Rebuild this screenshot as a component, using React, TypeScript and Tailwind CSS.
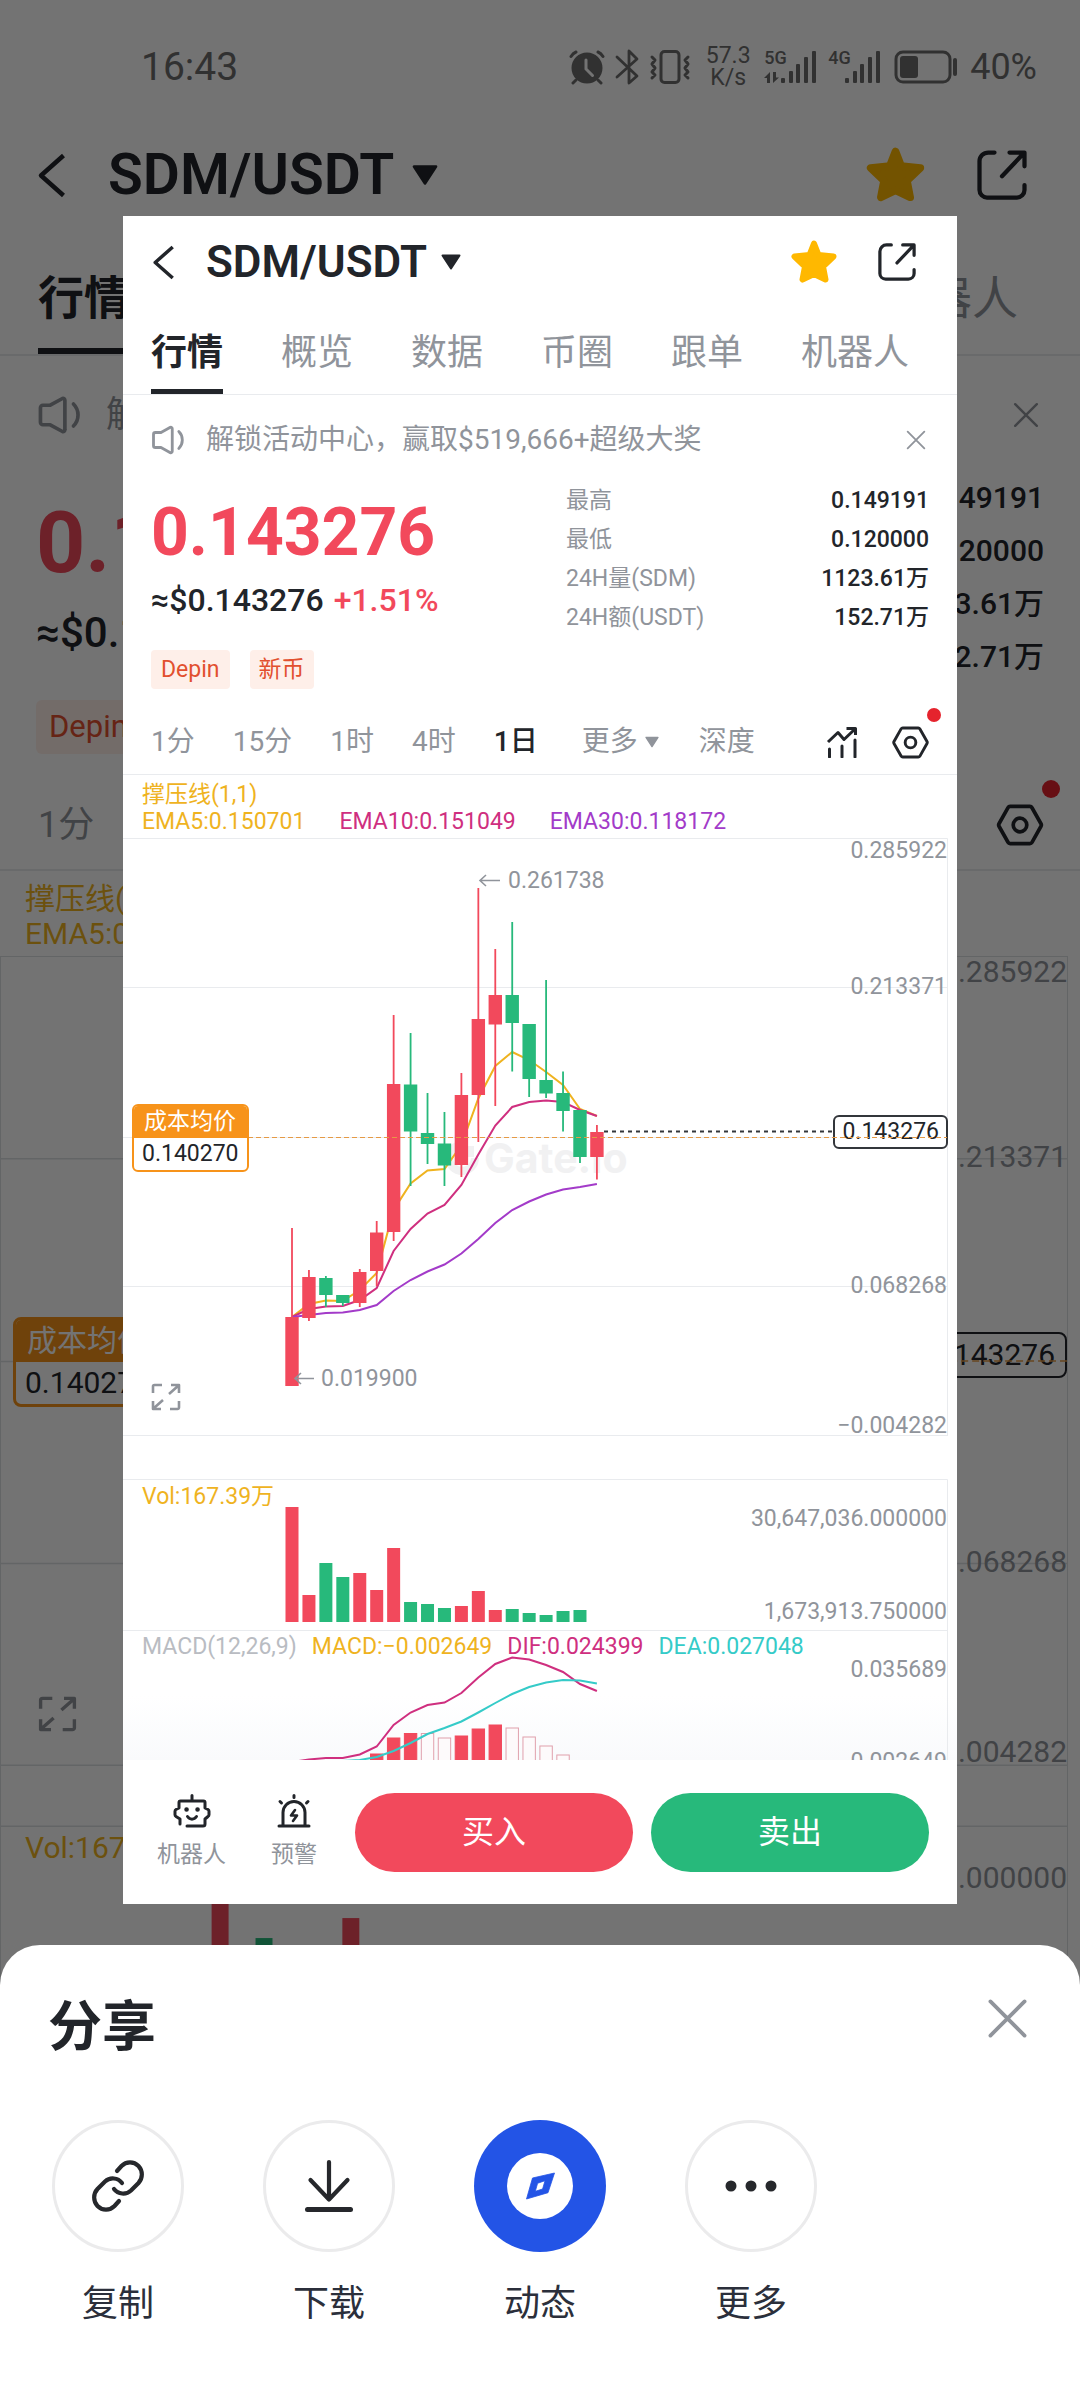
import React from 'react';

const RED = '#f2495c';
const GREEN = '#27b97b';
const YELLOW = '#efb31f';
const PINK = '#cf2f7f';
const PURPLE = '#a33bc9';
const CYAN = '#35cbc8';

const FIRST_X = 169;
const STEP = 16.94;

// high, low, body top, body bottom
const candles = [
  { high: 390, low: 548, top: 479, bottom: 548, up: true },
  { high: 432, low: 483, top: 439, bottom: 480, up: true },
  { high: 438, low: 469, top: 440, bottom: 457, up: false },
  { high: 457, low: 468, top: 457, bottom: 465, up: false },
  { high: 431, low: 469, top: 434, bottom: 465, up: true },
  { high: 383, low: 448, top: 394.5, bottom: 433, up: true },
  { high: 177, low: 403, top: 246, bottom: 394, up: true },
  { high: 195, low: 348, top: 246.5, bottom: 293.5, up: false },
  { high: 255, low: 326, top: 295, bottom: 306, up: false },
  { high: 274, low: 348, top: 305.5, bottom: 327.5, up: false },
  { high: 235, low: 339, top: 257, bottom: 327, up: true },
  { high: 50, low: 304, top: 181, bottom: 257, up: true },
  { high: 111, low: 268, top: 157, bottom: 186.5, up: true },
  { high: 84, low: 233.5, top: 157, bottom: 185, up: false },
  { high: 186, low: 259, top: 186, bottom: 241, up: false },
  { high: 142, low: 260, top: 242, bottom: 255.5, up: false },
  { high: 233.5, low: 293.5, top: 255, bottom: 273, up: false },
  { high: 272, low: 325, top: 272, bottom: 319, up: false },
  { high: 287, low: 341.5, top: 294, bottom: 319, up: true },
];

const ema5 = [479, 466, 462.5, 463, 452, 435, 372, 345.5, 332.5, 331, 307, 260.5, 228, 214, 222, 234, 247, 271, 278];
const ema10 = [479, 471, 468.5, 468, 462, 450, 413, 391, 375.5, 367, 347, 316.5, 287.5, 269, 264, 262.5, 264, 272, 278];
const ema30 = [479, 477, 475, 474.5, 472, 467, 453, 442, 433.5, 426.5, 415.5, 401, 385, 372, 363.5, 356.5, 351.5, 349, 346];

const volumes = [115, 27, 59, 45, 49, 32, 74, 20, 18, 14, 16, 31, 12, 13, 9, 7, 11, 12];

const dif = [131, 128.5, 127, 127, 123.5, 115.5, 94, 81.5, 74, 71.5, 62, 46.5, 33, 26.5, 28.5, 34, 41, 53, 60];
const dea = [133, 132, 131, 130, 129, 126, 120, 112, 103, 97, 90.5, 81.5, 72, 63, 56, 51.5, 49, 49.5, 52.5];
const macdBars = [
  { i: 5, top: 123, solid: true },
  { i: 6, top: 107, solid: true },
  { i: 7, top: 102.5, solid: true },
  { i: 8, top: 102.5, solid: false },
  { i: 9, top: 107, solid: false },
  { i: 10, top: 105, solid: true },
  { i: 11, top: 98, solid: true },
  { i: 12, top: 94, solid: true },
  { i: 13, top: 97, solid: false },
  { i: 14, top: 106, solid: false },
  { i: 15, top: 115, solid: false },
  { i: 16, top: 124, solid: false },
];

const cx = (i: number) => FIRST_X + i * STEP;
const toPoints = (ys: number[]) => ys.map((y, i) => `${cx(i).toFixed(1)},${y}`).join(' ');

type IconProps = { className?: string };

function BackIcon({ className }: IconProps) {
  return (
    <svg className={className} viewBox="0 0 24 36" fill="none" stroke="currentColor" strokeWidth="3.600" strokeLinejoin="round">
      <path d="M22 2L4 18l18 16" />
    </svg>
  );
}

function CaretIcon({ className }: IconProps) {
  return (
    <svg className={className} viewBox="0 0 20 16" fill="currentColor" stroke="currentColor" strokeWidth="2" strokeLinejoin="round">
      <path d="M1.500 1.500h17L10 14.500z" />
    </svg>
  );
}

function StarIcon({ className }: IconProps) {
  return (
    <svg className={className} viewBox="0 0 46 44" fill="#ffb800" stroke="#ffb800" strokeWidth="6" strokeLinejoin="round">
      <path d="M23 3.500l4.500 11.500 15 1.500-10.500 10 2.500 13L23 34l-11.500 5.500 2.500-13L3.500 16.500l15-1.500z" />
    </svg>
  );
}

function ShareIcon({ className }: IconProps) {
  return (
    <svg className={className} viewBox="0 0 40 40" fill="none" stroke="currentColor" strokeWidth="3.400" strokeLinecap="round" strokeLinejoin="round">
      <path d="M14 2H9a7 7 0 0 0-7 7v23a6 6 0 0 0 6 6h24a6 6 0 0 0 6-6v-4" />
      <path d="M26 2h12v11M37 3L20 21" />
    </svg>
  );
}

function SpeakerIcon({ className }: IconProps) {
  return (
    <svg className={className} viewBox="0 0 36 32" fill="none" stroke="currentColor" strokeWidth="3" strokeLinecap="round" strokeLinejoin="round">
      <path d="M4 8h6l10-5.500a1.500 1.500 0 0 1 2 1.500v24a1.500 1.500 0 0 1-2 1.500L10 24H4a2 2 0 0 1-2-2V10a2 2 0 0 1 2-2z" />
      <path d="M29 7c5 5 5 13 0 18" />
    </svg>
  );
}

function CloseIcon({ className }: IconProps) {
  return (
    <svg className={className} viewBox="0 0 24 24" fill="none" stroke="currentColor" strokeWidth="2.200" strokeLinecap="round">
      <path d="M2 2l20 20M22 2L2 22" />
    </svg>
  );
}

function TrendIcon({ className }: IconProps) {
  return (
    <svg className={className} viewBox="0 0 32 32" fill="none" stroke="currentColor" strokeWidth="3" strokeLinejoin="round">
      <path d="M2 16L12 6.500l6 7L29 3" />
      <path d="M20.500 2.500H29.500V9" />
      <path d="M3.500 23v8M16 20v11M29 14v17" strokeLinecap="round" />
    </svg>
  );
}

function HexIcon({ className }: IconProps) {
  return (
    <svg className={className} viewBox="0 0 38 34" fill="none" stroke="currentColor" strokeWidth="3" strokeLinejoin="round">
      <path d="M11 2h16a2 2 0 0 1 1.700 1L36 16a2 2 0 0 1 0 2l-7.300 13a2 2 0 0 1-1.700 1H11a2 2 0 0 1-1.700-1L2 18a2 2 0 0 1 0-2L9.300 3A2 2 0 0 1 11 2z" />
      <circle cx="19" cy="17" r="5.500" />
    </svg>
  );
}

function ExpandIcon({ className }: IconProps) {
  return (
    <svg className={className} viewBox="0 0 30 28" fill="none" stroke="currentColor" strokeWidth="2.600" strokeLinejoin="round">
      <path d="M2 10V3.500A1.500 1.500 0 0 1 3.500 2H11M28 18v6.500a1.500 1.500 0 0 1-1.500 1.500H19" />
      <path d="M20 2h8v8M27 3l-9 8M10 26H2v-8M3 25l9-8" />
    </svg>
  );
}

function RobotIcon({ className }: IconProps) {
  return (
    <svg className={className} viewBox="0 0 38 34" fill="none" stroke="currentColor" strokeWidth="3" strokeLinecap="round" strokeLinejoin="round">
      <path d="M7 30v-5l-4-2.500a2 2 0 0 1-1-1.700v-3.600a2 2 0 0 1 1-1.700L6 14v-5.500A1.500 1.500 0 0 1 7.500 7h23A1.500 1.500 0 0 1 32 8.500V14l3 1.500a2 2 0 0 1 1 1.700v3.600a2 2 0 0 1-1 1.700L32 25v5a2 2 0 0 1-2 2H14" />
      <path d="M19 1.500V6M14.500 22.500c2.500 3.500 6.500 3.500 9 0" />
      <path d="M13.500 15.500h.1M24.500 15.500h.1" strokeWidth="4.500" />
    </svg>
  );
}

function AlarmIcon({ className }: IconProps) {
  return (
    <svg className={className} viewBox="0 0 34 34" fill="none" stroke="currentColor" strokeWidth="3" strokeLinecap="round" strokeLinejoin="round">
      <path d="M2 32h30M6 32V18.500a11 11 0 0 1 22 0V32" />
      <path d="M17 1.500V3.500M3 7.500l1.500 1.500M31 7.500L29.500 9" />
      <path d="M18 16l-4 5.500h6l-4 5.500" strokeWidth="2.600" />
    </svg>
  );
}

function AlarmClockIcon({ className }: IconProps) {
  return (
    <svg className={className} viewBox="0 0 36 36" fill="none" stroke="currentColor" strokeLinecap="round">
      <circle cx="18" cy="19" r="14.500" fill="currentColor" strokeWidth="2" />
      <path d="M2 7.500C3.500 5 4.500 4 7 3M34 7.500C32.500 5 31.500 4 29 3M7 31l-3 3M29 31l3 3" strokeWidth="3" />
      <path d="M17 11v9l6.500 6.500" stroke="#fff" strokeWidth="3" />
    </svg>
  );
}

function BluetoothIcon({ className }: IconProps) {
  return (
    <svg className={className} viewBox="0 0 24 36" fill="none" stroke="currentColor" strokeWidth="2.800" strokeLinejoin="round" strokeLinecap="round">
      <path d="M2 8l20 19-8 7V2l8 8L2 28" />
    </svg>
  );
}

function VibrateIcon({ className }: IconProps) {
  return (
    <svg className={className} viewBox="0 0 42 36" fill="none" stroke="currentColor" strokeWidth="3" strokeLinejoin="round" strokeLinecap="round">
      <rect x="12" y="2.500" width="18" height="31" rx="3.500" />
      <path d="M3 8l3 3-3 4 3 4-3 4 3 3-3 3M39 8l-3 3 3 4-3 4 3 4-3 3 3 3" />
    </svg>
  );
}

function SignalBars({ className, arrows }: IconProps & { arrows?: boolean }) {
  return (
    <svg className={className} viewBox="0 0 52 36" fill="currentColor">
      {arrows && <path d="M6 34V23L0 29h3v5zM9 23v11l6-5.500h-3V23z" />}
      <rect x="17" y="29" width="4" height="5" rx="1" />
      <rect x="25" y="22" width="4" height="12" rx="1" />
      <rect x="32" y="15" width="4" height="19" rx="1" />
      <rect x="40" y="8" width="4" height="26" rx="1" />
      <rect x="48" y="2" width="4" height="32" rx="1" />
    </svg>
  );
}

function BatteryIcon({ className }: IconProps) {
  return (
    <svg className={className} viewBox="0 0 64 34" fill="none" stroke="currentColor" strokeWidth="3">
      <rect x="2" y="2" width="54" height="30" rx="7" />
      <rect x="6" y="6" width="18" height="22" rx="3" fill="currentColor" stroke="none" />
      <path d="M61 10v14" strokeWidth="4" strokeLinecap="round" />
    </svg>
  );
}

function StatusBar() {
  return (
    <div className="flex h-[120px] items-center pl-[141px] pr-[43px] pt-[14px] text-[#6e6e6e]">
      <span className="text-[39px] leading-[48px]">16:43</span>
      <div className="ml-auto flex items-center">
        <AlarmClockIcon className="h-9 w-9" />
        <BluetoothIcon className="ml-[10px] h-9 w-6" />
        <VibrateIcon className="ml-[10px] h-9 w-[42px]" />
        <span className="ml-[14px] w-[46px] text-center text-[23px] leading-[22px]">57.3 K/s</span>
        <span className="ml-[13px] h-9 w-[24px] text-[18px] font-medium leading-[18px]">5G</span>
        <SignalBars arrows className="-ml-6 h-9 w-[52px]" />
        <span className="ml-3 h-9 w-[24px] text-[18px] font-medium leading-[18px]">4G</span>
        <SignalBars className="-ml-6 h-9 w-[52px]" />
        <BatteryIcon className="ml-[14px] h-[34px] w-16" />
        <span className="ml-3 text-[36px] leading-[40px]">40%</span>
      </div>
    </div>
  );
}

const backdropLabels = [
  { text: '0.285922', y: 15 },
  { text: '0.213371', y: 200 },
  { text: '0.068268', y: 605 },
  { text: '−0.004282', y: 795 },
  { text: '30,647,036.000000', y: 921 },
];

function Backdrop() {
  return (
    <div aria-hidden="true" className="text-[#22252a]">
      <StatusBar />

      <div className="flex h-[110px] items-center pl-9 pr-[53px]">
        <BackIcon className="h-[45px] w-[30px]" />
        <span className="ml-[42px] text-[57px] font-semibold">SDM/USDT</span>
        <CaretIcon className="ml-[18px] h-[22px] w-[26px]" />
        <StarIcon className="ml-auto h-[56px] w-[59px]" />
        <ShareIcon className="ml-[52px] h-[50px] w-[50px]" />
      </div>

      <div className="flex h-[126px] justify-between border-b-2 border-[#e8eaed] pl-[38px] pr-[62px] text-[46px]">
        <span className="border-b-[6px] border-[#22252a] pt-[34px] font-bold leading-[68px]">行情</span>
        <span className="pt-[34px] leading-[68px] text-[#90949b]">机器人</span>
      </div>

      <div className="flex h-[115px] items-center pl-[38px] pr-[41px] pt-[3px] text-[36px] text-[#90949b]">
        <SpeakerIcon className="h-[40px] w-[44px]" />
        <span className="ml-6">解锁活动中心</span>
        <CloseIcon className="ml-auto h-[26px] w-[26px]" />
      </div>

      <div className="flex h-[302px] justify-between pl-[36px] pr-[36px]">
        <div>
          <div className="pt-[24px] text-[86px] font-bold leading-[96px] text-[#f2495c]">0.143276</div>
          <div className="pt-[18px] text-[42px] font-medium leading-[48px]">≈$0.143276</div>
          <div className="mt-[43px] w-fit rounded-md bg-[#feefe9] px-[13px] text-[31px] leading-[54px] text-[#e2502f]">Depin</div>
        </div>
        <div className="text-right text-[30px] font-medium leading-[53px]">
          <div>0.149191</div>
          <div>0.120000</div>
          <div>1123.61万</div>
          <div>152.71万</div>
        </div>
      </div>

      <div className="flex h-[98px] items-center justify-between border-b-2 border-[#e8eaed] pl-[38px] pr-[36px] pt-2">
        <span className="text-[36px] text-[#90949b]">1分</span>
        <span className="relative">
          <HexIcon className="h-[42px] w-[48px]" />
          <span className="absolute -right-4 -top-[24px] h-[18px] w-[18px] rounded-full bg-[#e5232d]" />
        </span>
      </div>

      <div className="h-[85px] pl-[25px] pt-[10px] text-[30px] leading-[35px] text-[#efb31f]">
        <div>撑压线(1,1)</div>
        <div>EMA5:0.150701</div>
      </div>

      <div className="relative mr-3 h-[1040px] border-x border-t border-[#dcdfe3] text-[30px] leading-[36px] text-[#90949b]">
        <svg className="absolute inset-0 h-full w-full" viewBox="0 0 1068 1040" preserveAspectRatio="none">
          <g stroke="#dcdfe3" strokeWidth="1.500">
            <path d="M0 202H1068M0 405H1068M0 607H1068M0 809H1068M0 870H1068" />
          </g>
          <rect x="211" y="880" width="17" height="150" fill={RED} />
          <rect x="255" y="982" width="17" height="50" fill={GREEN} />
          <rect x="342" y="962" width="17" height="70" fill={RED} />
        </svg>
        {backdropLabels.map((label) => (
          <span key={label.text} className="absolute right-0 -translate-y-1/2" style={{ top: label.y }}>
            {label.text}
          </span>
        ))}
        <span className="absolute right-0 top-[375px] rounded-lg border-2 border-[#22252a] bg-white px-[10px] leading-[42px] text-[#22252a]">0.143276</span>
        <div className="absolute left-3 top-[360px] overflow-hidden rounded-lg border-[3px] border-[#f7931a] bg-white leading-[42px] text-[#22252a]">
          <div className="bg-[#f7931a] px-[11px] text-white">成本均价</div>
          <div className="px-[9px]">0.140270</div>
        </div>
        <svg className="absolute inset-x-0 top-[402px] h-1 w-full" viewBox="0 0 1068 4" preserveAspectRatio="none">
          <path d="M830 2H1068" stroke="#e59a45" strokeWidth="1.500" strokeDasharray="7 4" />
        </svg>
        <ExpandIcon className="absolute left-[37px] top-[738px] h-[38px] w-[39px]" />
        <span className="absolute left-[24px] top-[873px] text-[#efb31f]">Vol:167.39万</span>
      </div>
    </div>
  );
}

const tabs = ['行情', '概览', '数据', '币圈', '跟单', '机器人'];

const stats = [
  { label: '最高', value: '0.149191' },
  { label: '最低', value: '0.120000' },
  { label: '24H量(SDM)', value: '1123.61万' },
  { label: '24H额(USDT)', value: '152.71万' },
];

const periods = ['1分', '15分', '1时', '4时', '1日'];

function AxisLabel({ text, y }: { text: string; y: number }) {
  return (
    <span className="absolute right-[10px] -translate-y-1/2 text-[#90949b]" style={{ top: y }}>
      {text}
    </span>
  );
}

function PriceChart() {
  return (
    <div className="relative h-[598px]">
      <svg className="absolute inset-0 h-full w-full" viewBox="0 0 834 598" preserveAspectRatio="none" stroke="#e9ebee">
        <path d="M0 .5H824.500V598M0 149.500H824M0 299.500H824M0 448.500H824M0 597.500H824" fill="none" />
      </svg>
      <div className="absolute left-[322px] top-[297px] flex items-center gap-[5px] text-[#f1f1f2]">
        <svg className="h-[34px] w-[34px]" viewBox="0 0 34 34" fill="none" stroke="currentColor" strokeWidth="8">
          <path d="M17 4a13 13 0 1 0 13 13" />
          <rect x="18" y="5" width="11" height="11" fill="currentColor" stroke="none" />
        </svg>
        <span className="font-['Inter',sans-serif] text-[41px] font-bold leading-[46px]">Gate.io</span>
      </div>
      <AxisLabel text="0.285922" y={12} />
      <AxisLabel text="0.213371" y={148} />
      <AxisLabel text="0.068268" y={447} />
      <AxisLabel text="−0.004282" y={587} />
      <span className="absolute right-[9px] top-[277px] rounded-md border-2 border-[#33363b] bg-white px-[7px] leading-[30px] text-[#22252a]">0.143276</span>
      <svg className="absolute inset-0 h-full w-full" viewBox="0 0 834 598" preserveAspectRatio="none">
        <g fill="none" strokeWidth="2">
          <polyline points={toPoints(ema5)} stroke={YELLOW} />
          <polyline points={toPoints(ema10)} stroke={PINK} />
          <polyline points={toPoints(ema30)} stroke={PURPLE} />
        </g>
        {candles.map((c, i) => (
          <g key={i} fill={c.up ? RED : GREEN}>
            <rect x={cx(i) - 0.9} y={c.high} width="1.8" height={c.low - c.high} />
            <rect x={cx(i) - 6.7} y={c.top} width="13.4" height={c.bottom - c.top} />
          </g>
        ))}
        <path d="M481 293.500H711" stroke="#33363b" strokeWidth="2" strokeDasharray="4 4" />
        <path d="M125 299.500H824" stroke="#e59a45" strokeWidth="1.2" strokeDasharray="5 3" />
        <g stroke="#90949b" strokeWidth="1.600" fill="none">
          <path d="M377 42.500H357M363 37l-6 5.500 6 5.500" />
          <path d="M191 540.500H172M178 535l-6 5.500 6 5.500" />
        </g>
      </svg>
      <span className="absolute left-[385px] top-[29px] text-[#90949b]">0.261738</span>
      <span className="absolute left-[198px] top-[527px] text-[#90949b]">0.019900</span>
      <div className="absolute left-[9px] top-[266px] overflow-hidden rounded-md border-2 border-[#f7931a] bg-white leading-[32px] text-[#22252a]">
        <div className="bg-[#f7931a] px-[10px] text-white">成本均价</div>
        <div className="px-2">0.140270</div>
      </div>
      <button aria-label="全屏" className="absolute left-[28px] top-[545px] text-[#90949b]">
        <ExpandIcon className="h-7 w-[30px]" />
      </button>
    </div>
  );
}

function VolumeChart() {
  return (
    <div className="relative mt-[43px] h-[152px]">
      <svg className="absolute inset-0 h-full w-full" viewBox="0 0 834 152" preserveAspectRatio="none">
        <path d="M0 .5H824.500V152M0 151.500H824" fill="none" stroke="#e9ebee" />
        {volumes.map((v, i) => (
          <rect key={i} x={cx(i) - 6.5} y={143 - v} width="13" height={v} fill={candles[i].up ? RED : GREEN} />
        ))}
      </svg>
      <span className="absolute left-[19px] top-[4px] text-[#efb31f]">Vol:167.39万</span>
      <AxisLabel text="30,647,036.000000" y={39} />
      <AxisLabel text="1,673,913.750000" y={132} />
    </div>
  );
}

function MacdChart() {
  return (
    <div className="relative h-[129px] overflow-hidden bg-gradient-to-b from-white from-50% to-[#f9fafc]">
      <svg className="absolute inset-0 h-full w-full" viewBox="0 0 834 129" preserveAspectRatio="none">
        <path d="M824.500 0V129" stroke="#e9ebee" />
        {macdBars.map((b) => (
          <rect
            key={b.i}
            x={cx(b.i) - 6.2}
            y={b.top}
            width="12.4"
            height="40"
            fill={b.solid ? RED : '#fdfafb'}
            stroke={b.solid ? RED : '#e0a0ac'}
          />
        ))}
        <g fill="none" strokeWidth="2">
          <polyline points={toPoints(dif)} stroke={PINK} />
          <polyline points={toPoints(dea)} stroke={CYAN} />
        </g>
      </svg>
      <div className="relative flex gap-[15px] pl-[19px] pt-[2px]">
        <span className="text-[#b9bcc2]">MACD(12,26,9)</span>
        <span className="text-[#efb31f]">MACD:−0.002649</span>
        <span className="text-[#cf2f7f]">DIF:0.024399</span>
        <span className="text-[#35cbc8]">DEA:0.027048</span>
      </div>
      <AxisLabel text="0.035689" y={38} />
      <AxisLabel text="−0.002649" y={130} />
    </div>
  );
}

function SharePreview() {
  return (
    <main className="mx-[123px] bg-white text-[#22252a]">
      <header className="flex h-[92px] items-center pl-[28px] pr-[40px]">
        <button aria-label="返回">
          <BackIcon className="h-[35px] w-6" />
        </button>
        <h1 className="ml-[31px] text-[44px] font-semibold">SDM/USDT</h1>
        <CaretIcon className="ml-[14px] h-4 w-5" />
        <button aria-label="收藏" className="ml-auto">
          <StarIcon className="h-11 w-[46px]" />
        </button>
        <button aria-label="分享" className="ml-[40px]">
          <ShareIcon className="h-[38px] w-10" />
        </button>
      </header>

      <nav className="flex h-[87px] gap-[58px] border-b border-[#e9ebee] pl-[28px] text-[36px] leading-[54px] text-[#90949b]">
        {tabs.map((tab, i) => (
          <a
            key={tab}
            href="#"
            className={i === 0 ? 'border-b-[5px] border-[#22252a] pt-[18px] font-bold text-[#22252a]' : 'pt-[18px]'}
          >
            {tab}
          </a>
        ))}
      </nav>

      <div className="flex h-[86px] items-center px-[28px] pt-[4px] text-[28px] text-[#90949b]">
        <SpeakerIcon className="h-[30px] w-[35px]" />
        <p className="ml-5">解锁活动中心，赢取$519,666+超级大奖</p>
        <button aria-label="关闭" className="ml-auto mr-[3px]">
          <CloseIcon className="h-5 w-5" />
        </button>
      </div>

      <section className="flex justify-between px-[28px] pb-[21px]">
        <div className="pt-[16px]">
          <div className="text-[66px] font-bold leading-[72px] text-[#f2495c]">0.143276</div>
          <div className="mt-[11px] flex gap-[10px] text-[32px] font-medium leading-[40px]">
            <span>≈$0.143276</span>
            <span className="text-[#f2495c]">+1.51%</span>
          </div>
          <div className="mt-[30px] flex gap-5 text-[23px] leading-[39px] text-[#e2502f]">
            <span className="rounded bg-[#feefe9] px-[10px]">Depin</span>
            <span className="rounded bg-[#feefe9] px-[9px]">新币</span>
          </div>
        </div>
        <dl className="w-[363px] text-[23px] leading-[39px]">
          {stats.map((s) => (
            <div key={s.label} className="flex justify-between">
              <dt className="text-[#90949b]">{s.label}</dt>
              <dd className="font-medium">{s.value}</dd>
            </div>
          ))}
        </dl>
      </section>

      <div className="flex h-[65px] items-center border-b border-[#e9ebee] px-[28px] text-[28px] text-[#90949b]">
        <div className="flex gap-[38px]">
          {periods.map((p) => (
            <button key={p} className={p === '1日' ? 'font-medium text-[#22252a]' : ''}>
              {p}
            </button>
          ))}
        </div>
        <button className="ml-[44px] flex items-center gap-[7px]">
          更多
          <CaretIcon className="h-3 w-[14px]" />
        </button>
        <button className="ml-10">深度</button>
        <button aria-label="指标" className="ml-auto text-[#22252a]">
          <TrendIcon className="h-8 w-8" />
        </button>
        <button aria-label="设置" className="relative ml-[34px] text-[#22252a]">
          <HexIcon className="h-[33px] w-[37px]" />
          <span className="absolute -right-3 -top-[18px] h-[14px] w-[14px] rounded-full bg-[#e5232d]" />
        </button>
      </div>

      <div className="text-[23px] leading-[27px]">
        <div className="h-[63px] pl-[19px] pt-[6px]">
          <div className="text-[#efb31f]">撑压线(1,1)</div>
          <div className="flex gap-[34px]">
            <span className="text-[#efb31f]">EMA5:0.150701</span>
            <span className="text-[#cf2f7f]">EMA10:0.151049</span>
            <span className="text-[#a33bc9]">EMA30:0.118172</span>
          </div>
        </div>
        <PriceChart />
        <VolumeChart />
        <MacdChart />
      </div>

      <footer className="flex h-[144px] items-center pl-[34px] pr-[28px] text-[23px] leading-[30px] text-[#90949b]">
        <button className="flex flex-col items-center gap-3">
          <RobotIcon className="h-[34px] w-[38px] text-[#22252a]" />
          机器人
        </button>
        <button className="ml-[45px] flex flex-col items-center gap-3">
          <AlarmIcon className="h-[34px] w-[36px] text-[#22252a]" />
          预警
        </button>
        <button className="ml-[38px] h-[79px] flex-1 rounded-full bg-[#f2495c] text-[32px] text-white">买入</button>
        <button className="ml-[18px] h-[79px] flex-1 rounded-full bg-[#27b97b] text-[32px] text-white">卖出</button>
      </footer>
    </main>
  );
}

function ShareAction({ label, filled, children }: { label: string; filled?: boolean; children: React.ReactNode }) {
  return (
    <button className="flex flex-col items-center gap-[26px] text-[36px] leading-[52px] text-[#2b2f3b]">
      <span
        className={
          filled
            ? 'flex h-[132px] w-[132px] items-center justify-center rounded-full bg-[#2354e6]'
            : 'flex h-[132px] w-[132px] items-center justify-center rounded-full border-[3px] border-[#ebebec] text-[#26282c]'
        }
      >
        {children}
      </span>
      {label}
    </button>
  );
}

function ShareSheet() {
  return (
    <section className="mt-[41px] flex-1 rounded-t-[40px] bg-white">
      <div className="flex items-start justify-between pl-12 pr-[52px] pt-[48px]">
        <h2 className="text-[54px] font-bold leading-[70px] text-[#22252a]">分享</h2>
        <button aria-label="关闭" className="pt-[5px] text-[#90949b]">
          <CloseIcon className="h-[41px] w-[41px]" />
        </button>
      </div>
      <div className="flex gap-[79px] pl-[52px] pt-[57px]">
        <ShareAction label="复制">
          <svg className="h-[54px] w-[54px]" viewBox="-1 -1 54 54" fill="none" stroke="currentColor" strokeWidth="4.200" strokeLinecap="round">
            <path d="M25 11l4.500-5a11.800 11.800 0 0 1 17 0 12.500 12.500 0 0 1 0 17L39 30.500a11.500 11.500 0 0 1-17-1.500" />
            <path d="M27 41l-4.500 5a11.800 11.800 0 0 1-17 0 12.500 12.500 0 0 1 0-17L13 21.500a11.500 11.500 0 0 1 17 1.500" />
          </svg>
        </ShareAction>
        <ShareAction label="下载">
          <svg className="h-[54px] w-[50px]" viewBox="0 0 50 54" fill="none" stroke="currentColor" strokeWidth="4.200" strokeLinecap="round" strokeLinejoin="round">
            <path d="M25 3v37M6.500 21L25 40.500 43.500 21" />
            <path d="M3.500 50.500h43" strokeWidth="5" />
          </svg>
        </ShareAction>
        <ShareAction label="动态" filled>
          <svg className="h-[66px] w-[66px]" viewBox="0 0 66 66">
            <circle cx="33" cy="33" r="33" fill="#fff" />
            <path
              d="M47.500 20L41 39.700 19.500 46l6-21zM38 27.700l-7.400 2.600-2.300 8 7.300-2.300z"
              fill="#2354e6"
              stroke="#2354e6"
              strokeWidth=".8"
              strokeLinejoin="round"
              fillRule="evenodd"
            />
          </svg>
        </ShareAction>
        <ShareAction label="更多">
          <svg className="h-3 w-[52px]" viewBox="0 0 52 12" fill="currentColor">
            <circle cx="6" cy="6" r="5.500" />
            <circle cx="26" cy="6" r="5.500" />
            <circle cx="46" cy="6" r="5.500" />
          </svg>
        </ShareAction>
      </div>
    </section>
  );
}

export default function App() {
  return (
    <div className="relative min-h-screen overflow-hidden bg-white font-['Roboto','Noto_Sans_CJK_SC',sans-serif]">
      <Backdrop />
      <div className="absolute inset-0 flex flex-col bg-black/55 pt-[216px]">
        <SharePreview />
        <ShareSheet />
      </div>
    </div>
  );
}
